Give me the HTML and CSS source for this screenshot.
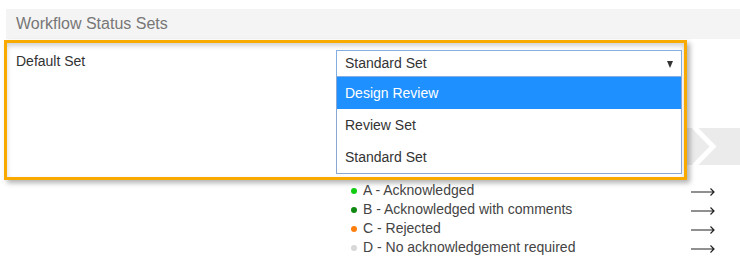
FILE: index.html
```html
<!DOCTYPE html>
<html>
    <head>
        <meta charset="UTF-8" />
        <meta name="viewport" content="width=device-width" />
        <title>Workflow Status Sets</title>
        <link rel="stylesheet" href="styles.css">
    </head>
    <body>
        <div class="page">
            <h2 class="section-title">Workflow Status Sets</h2>

            <!-- stage strip sitting behind the highlighted field -->
            <div class="stage-bar">
                <svg width="180" height="37" viewBox="0 0 180 37">
                    <polyline points="134,-1 153,18.5 134,38" fill="none" stroke="#ffffff" stroke-width="5" />
                </svg>
            </div>

            <div class="field-row">
                <label class="field-label">Default Set</label>
                <div class="select">
                    <div class="select-value">Standard Set<span class="select-arrow"></span></div>
                    <ul class="select-options">
                        <li class="option selected">Design Review</li>
                        <li class="option">Review Set</li>
                        <li class="option">Standard Set</li>
                    </ul>
                </div>
            </div>

            <ul class="status-list">
                <li class="status"><span class="dot dot-a"></span>A - Acknowledged<svg class="arrow" width="24" height="10" viewBox="0 0 24 10"><path d="M0 5H23M19.5 1.5L23 5L19.5 8.5" fill="none" stroke="#222" stroke-width="1.2" /></svg></li>
                <li class="status"><span class="dot dot-b"></span>B - Acknowledged with comments<svg class="arrow" width="24" height="10" viewBox="0 0 24 10"><path d="M0 5H23M19.5 1.5L23 5L19.5 8.5" fill="none" stroke="#222" stroke-width="1.2" /></svg></li>
                <li class="status"><span class="dot dot-c"></span>C - Rejected<svg class="arrow" width="24" height="10" viewBox="0 0 24 10"><path d="M0 5H23M19.5 1.5L23 5L19.5 8.5" fill="none" stroke="#222" stroke-width="1.2" /></svg></li>
                <li class="status"><span class="dot dot-d"></span>D - No acknowledgement required<svg class="arrow" width="24" height="10" viewBox="0 0 24 10"><path d="M0 5H23M19.5 1.5L23 5L19.5 8.5" fill="none" stroke="#222" stroke-width="1.2" /></svg></li>
            </ul>
        </div>
    </body>
</html>
```

FILE: styles.css
```css
body {
    margin: 0;
    font-family: "Liberation Sans", Arial, sans-serif;
    font-size: 14px;
    color: #333333;
    background-color: #ffffff;
}

.page {
    position: relative;
    width: 740px;
    height: 273px;
    overflow: hidden;
}

.section-title {
    margin: 9px 0 0 6px;
    padding-left: 10px;
    height: 30px;
    line-height: 30px;
    font-size: 16px;
    font-weight: normal;
    color: #777777;
    background-color: #f4f4f4;
}

.stage-bar {
    position: absolute;
    top: 128px;
    left: 560px;
    width: 180px;
    height: 37px;
    background-color: #ebebeb;
    z-index: 0;
}

.stage-bar svg {
    display: block;
}

.field-row {
    position: relative;
    z-index: 1;
    display: grid;
    grid-template-columns: 320px 346px;
    box-sizing: border-box;
    margin: 1px 0 0 4px;
    width: 683px;
    height: 140px;
    padding: 7px 3px 0 9px;
    background-color: #ffffff;
    border: 3px solid #f8aa00;
    box-shadow: inset 0 3px 5px rgba(0, 0, 0, 0.18), 3px 3px 5px rgba(0, 0, 0, 0.3);
}

.field-label {
    padding-top: 3px;
    line-height: 16px;
}

.select {
    position: relative;
}

.select-value {
    position: relative;
    height: 25px;
    line-height: 25px;
    padding-left: 8px;
    border: 1px solid #84aee0;
    background-color: #ffffff;
}

.select-arrow {
    position: absolute;
    top: 10px;
    right: 8px;
    border-left: 3.5px solid transparent;
    border-right: 3.5px solid transparent;
    border-top: 7px solid #333333;
}

.select-options {
    position: absolute;
    top: 27px;
    left: 0;
    right: 0;
    margin: 0;
    padding: 0;
    list-style: none;
    background-color: #ffffff;
    border: 1px solid #8aa6d2;
    border-top: none;
}

.option {
    height: 32px;
    line-height: 32px;
    padding-left: 8px;
}

.option.selected {
    background-color: #1e90ff;
    color: #ffffff;
}

.status-list {
    margin: 1px 0 0 351px;
    padding: 0;
    width: 389px;
    list-style: none;
    color: #444444;
}

.status {
    display: flex;
    align-items: center;
    height: 19px;
    line-height: 19px;
}

.dot {
    width: 6px;
    height: 6px;
    border-radius: 50%;
    margin: 1px 6px 0 0;
}

.dot-a {
    background-color: #11cc11;
}

.dot-b {
    background-color: #118811;
}

.dot-c {
    background-color: #ff7f0e;
}

.dot-d {
    background-color: #d8d8d8;
}

.arrow {
    margin: 3px 25px 0 auto;
}
```
